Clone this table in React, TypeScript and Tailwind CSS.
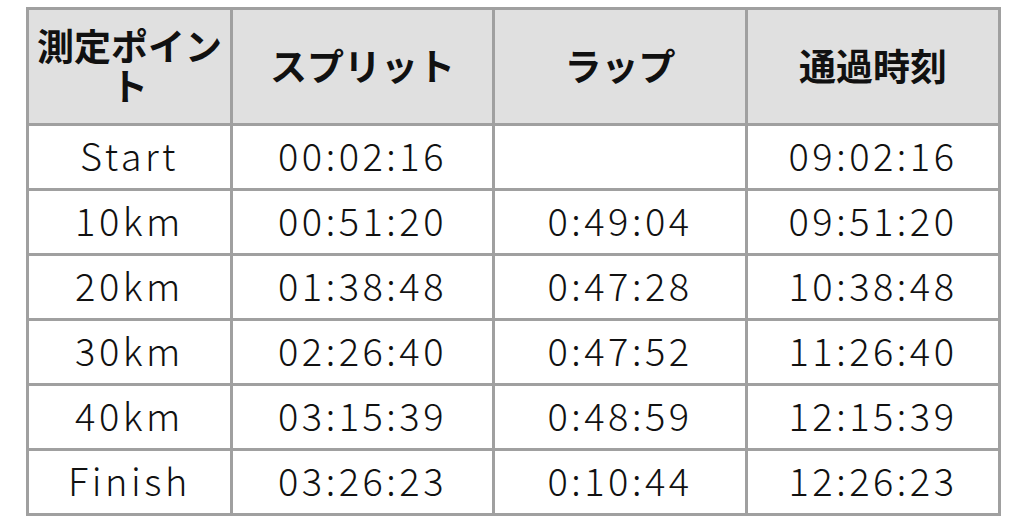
const rows = [
  ['Start', '00:02:16', '', '09:02:16'],
  ['10km', '00:51:20', '0:49:04', '09:51:20'],
  ['20km', '01:38:48', '0:47:28', '10:38:48'],
  ['30km', '02:26:40', '0:47:52', '11:26:40'],
  ['40km', '03:15:39', '0:48:59', '12:15:39'],
  ['Finish', '03:26:23', '0:10:44', '12:26:23'],
];

const headers = ['測定ポイント', 'スプリット', 'ラップ', '通過時刻'];

export default function App() {
  return (
    <div
      className="w-[1024px] h-[526px] bg-white pt-[7px] pl-[26px] overflow-hidden"
      style={{ fontFamily: '"Noto Sans CJK JP", "Noto Sans", sans-serif' }}
    >
      <table className="table-fixed border-collapse w-[972px] text-[#111]">
        <colgroup>
          <col className="w-[204px]" />
          <col className="w-[262px]" />
          <col className="w-[253px]" />
          <col className="w-[253px]" />
        </colgroup>
        <thead>
          <tr className="h-[116px] bg-[#e0e0e0]">
            {headers.map((h) => (
              <th
                key={h}
                className="border-[3px] border-[#a0a0a0] px-1 pb-[3px] text-[37px] leading-[40px] font-bold text-center align-middle"
              >
                {h}
              </th>
            ))}
          </tr>
        </thead>
        <tbody>
          {rows.map((r) => (
            <tr key={r[0]} className="h-[65px]">
              {r.map((c, i) => (
                <td
                  key={i}
                  className="border-[3px] border-[#a0a0a0] pb-[5px] text-center align-middle text-[38px] leading-none font-light tracking-[3.5px]"
                >
                  {c}
                </td>
              ))}
            </tr>
          ))}
        </tbody>
      </table>
    </div>
  );
}
